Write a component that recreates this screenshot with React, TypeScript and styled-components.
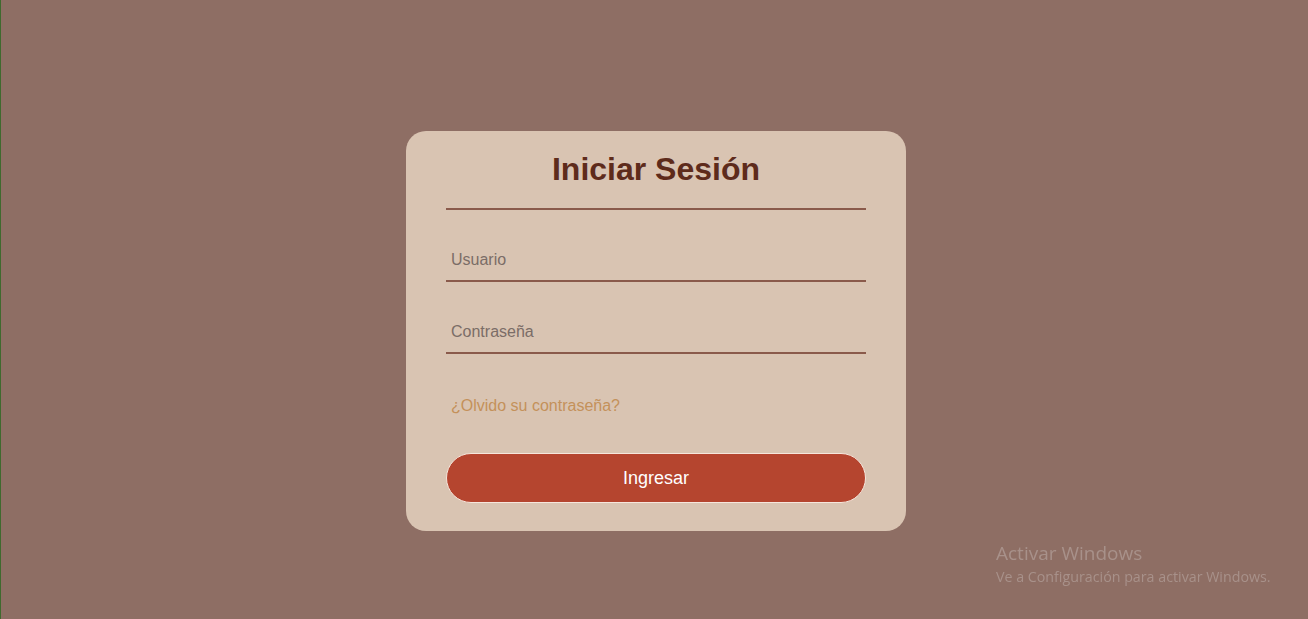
import React from "react";
import styled, { createGlobalStyle } from "styled-components";

const GlobalStyle = createGlobalStyle`
  html, body {
    margin: 0;
    padding: 0;
  }
  body {
    font-family: "Liberation Sans", Arial, sans-serif;
    background: #8e6e64;
  }
  * { box-sizing: border-box; }
`;

const Page = styled.div`
  min-height: 100vh;
  background: #8e6e64;
  border-left: 1px solid #3f6a2e;
  display: flex;
  justify-content: center;
  align-items: flex-start;
  padding: 131px 0 0 3px;
`;

const Card = styled.form`
  width: 500px;
  height: 400px;
  background: #d9c4b2;
  border-radius: 20px;
  padding: 20px 40px 28px;
  display: flex;
  flex-direction: column;
`;

const Title = styled.h1`
  margin: 0;
  font-size: 32px;
  line-height: 37px;
  font-weight: 700;
  color: #5e2b1b;
  text-align: center;
`;

const Divider = styled.hr`
  margin: 20px 0 0;
  border: none;
  height: 2px;
  background: #8a5a4b;
`;

const Field = styled.input`
  display: block;
  width: 100%;
  height: 43px;
  margin-top: 29px;
  padding: 0 5px;
  border: none;
  border-bottom: 2px solid #8a5a4b;
  background: transparent;
  font-family: "Liberation Sans", Arial, sans-serif;
  font-size: 16px;
  line-height: 18px;
  color: #4a3530;
  outline: none;
  &::placeholder {
    color: #7b6d67;
  }
`;

const Forgot = styled.a`
  display: block;
  margin-top: 43px;
  padding-left: 5px;
  font-size: 16px;
  line-height: 18px;
  color: #c4915a;
  text-decoration: none;
  cursor: pointer;
`;

const Submit = styled.button`
  margin-top: 38px;
  width: 100%;
  height: 50px;
  padding: 1px 0 0;
  border-radius: 25px;
  border: 1px solid #f6e6dc;
  background: #b5452f;
  color: #ffffff;
  font-family: "Liberation Sans", Arial, sans-serif;
  font-size: 18px;
  cursor: pointer;
`;

const Watermark = styled.div`
  position: fixed;
  left: 996px;
  top: 541px;
  font-family: "Open Sans", "Noto Sans", sans-serif;
  color: #a8918a;
  pointer-events: none;
`;

const WatermarkTitle = styled.div`
  font-size: 19px;
  line-height: 25px;
`;

const WatermarkText = styled.div`
  font-size: 14.25px;
  line-height: 21px;
`;

export default function App() {
  return (
    <>
      <GlobalStyle />
      <Page>
        <Card onSubmit={(e) => e.preventDefault()}>
          <Title>Iniciar Sesión</Title>
          <Divider />
          <Field type="text" placeholder="Usuario" />
          <Field type="password" placeholder="Contraseña" />
          <Forgot>¿Olvido su contraseña?</Forgot>
          <Submit type="submit">Ingresar</Submit>
        </Card>
      </Page>
      <Watermark>
        <WatermarkTitle>Activar Windows</WatermarkTitle>
        <WatermarkText>Ve a Configuración para activar Windows.</WatermarkText>
      </Watermark>
    </>
  );
}
